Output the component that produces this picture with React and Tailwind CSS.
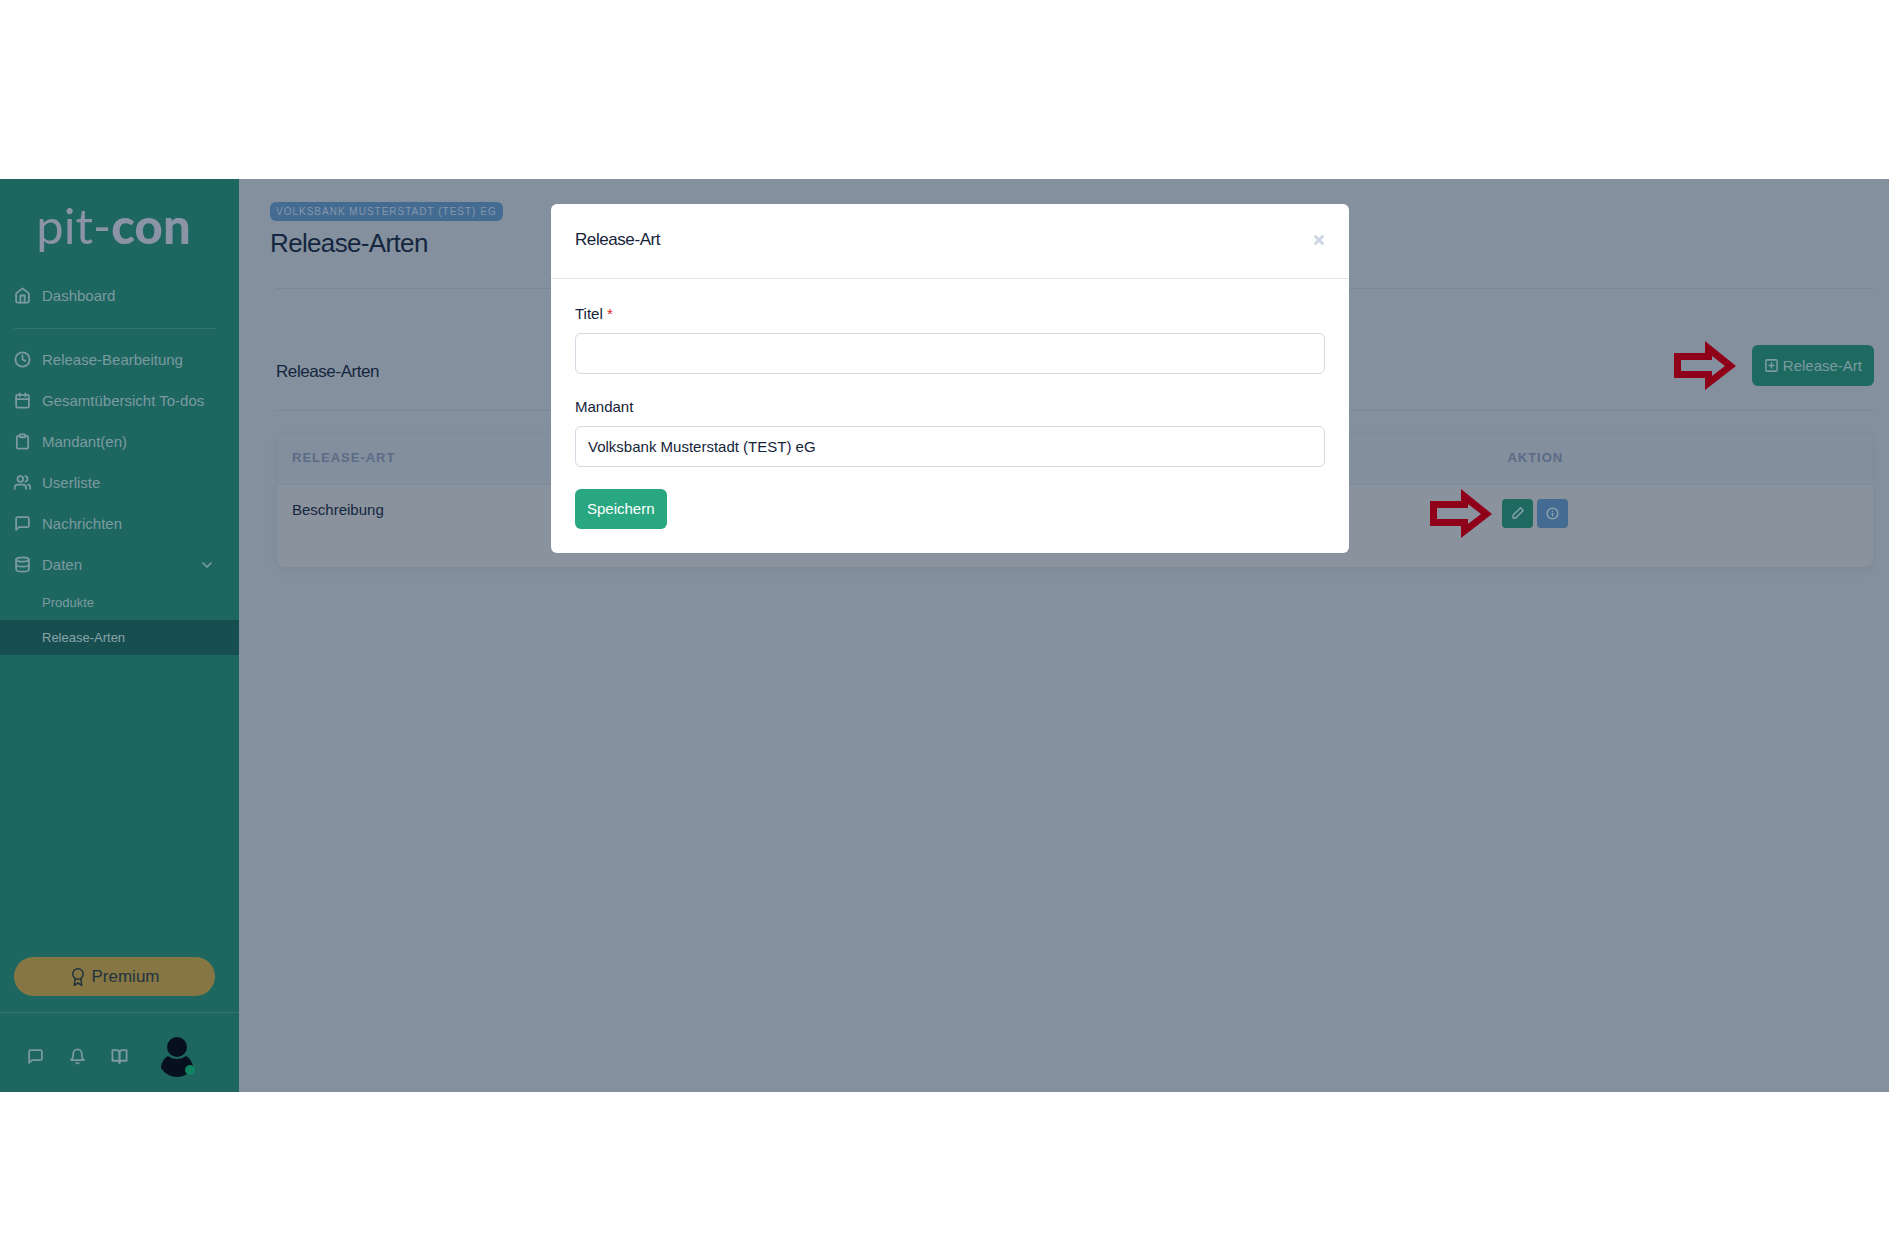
import {
  FiAward,
  FiBell,
  FiBookOpen,
  FiCalendar,
  FiChevronDown,
  FiClipboard,
  FiClock,
  FiDatabase,
  FiHome,
  FiInfo,
  FiMessageSquare,
  FiPlusSquare,
  FiUsers,
} from "react-icons/fi";

const navItems = [
  { label: "Release-Bearbeitung", icon: FiClock },
  { label: "Gesamtübersicht To-dos", icon: FiCalendar },
  { label: "Mandant(en)", icon: FiClipboard },
  { label: "Userliste", icon: FiUsers },
  { label: "Nachrichten", icon: FiMessageSquare },
  { label: "Daten", icon: FiDatabase, open: true },
];

const NavLink = ({ label, icon: Icon, open }) => (
  <a href="#" className="flex h-[41px] items-center pl-[14px] pr-6 text-[#7b9ba0]">
    <Icon className="mr-3 h-[17px] w-[17px] stroke-[2.5]" />
    <span className="-ml-px flex-1">{label}</span>
    {open && <FiChevronDown className="h-4 w-4 stroke-[2.5]" />}
  </a>
);

const Arrow = ({ className = "" }) => (
  <svg viewBox="0 0 62 49" className={`h-[49px] w-[62px] ${className}`}>
    <path
      fillRule="evenodd"
      fill="#8f0019"
      d="M0 12H31V0L62 25L31 49V37H0ZM7 19V30H38V35L51 25L38 15V19Z"
    />
  </svg>
);

const PencilIcon = () => (
  <svg viewBox="0 0 12 12" className="h-3 w-3" fill="none" stroke="currentColor" strokeWidth="1.3" strokeLinejoin="round">
    <path d="M8.5 .8L11.2 3.5L3.8 11H1V8.2Z" />
  </svg>
);

const Avatar = () => (
  <div className="relative ml-auto h-10 w-8">
    <svg viewBox="0 0 32 40" className="h-10 w-8" fill="#07101d">
      <circle cx="16" cy="10" r="10" />
      <path d="M7 19C2 22 0 27 0 31C4 37 10 40 16 40C22 40 28 37 32 31C32 27 30 22 25 19C20 23 12 23 7 19Z" />
    </svg>
    <span className="absolute -right-0.5 bottom-0.5 h-[10px] w-[10px] rounded-full bg-[#118361]" />
  </div>
);

const Sidebar = () => (
  <aside className="flex w-[239px] shrink-0 flex-col bg-[#1e6660]">
    <div className="mt-4 flex h-20 items-start justify-center pr-3 font-[Lato,sans-serif] text-[49px] leading-[60px] text-[#8a94a5]">
      <span>pit-</span>
      <span className="font-black">con</span>
    </div>
    <nav>
      <NavLink label="Dashboard" icon={FiHome} />
      <hr className="mb-[10px] ml-[14px] mr-6 mt-3 border-[#30756e]" />
      {navItems.map((item) => (
        <NavLink key={item.label} {...item} />
      ))}
      <a href="#" className="flex h-[35px] items-center pl-[42px] text-[13px] text-[#7b9ba0]">
        Produkte
      </a>
      <a href="#" className="flex h-[35px] items-center bg-[#174f50] pl-[42px] text-[13px] text-[#8aa3a8]">
        Release-Arten
      </a>
    </nav>
    <div className="mt-auto">
      <button className="mb-4 ml-[14px] flex h-[39px] w-[201px] items-center justify-center gap-1 rounded-full bg-[#857643] text-[17px] text-[#22333f]">
        <FiAward className="h-[18px] w-[18px]" />
        Premium
      </button>
      <div className="flex h-20 items-center border-t border-[#347771] pb-1 pl-[27px] pr-[46px] pt-3 text-[#7b9ba0]">
        <button aria-label="Nachrichten" className="mr-[25px]">
          <FiMessageSquare className="h-[17px] w-[17px] stroke-[2.5]" />
        </button>
        <button aria-label="Benachrichtigungen" className="mr-[25px]">
          <FiBell className="h-[17px] w-[17px] stroke-[2.5]" />
        </button>
        <button aria-label="Handbuch">
          <FiBookOpen className="h-[17px] w-[17px] stroke-[2.5]" />
        </button>
        <Avatar />
      </div>
    </div>
  </aside>
);

const ReleaseTable = () => (
  <div className="mt-[21px] overflow-hidden rounded-lg border border-[#808b9a] bg-[#8a929d] shadow-md shadow-[#7b8798]/30">
    <table className="w-full table-fixed">
      <thead className="bg-[#848f9d] text-[13px] tracking-[1px] text-[#5b6b86]">
        <tr className="h-[51px] border-b border-[#7f8a98]">
          <th className="w-[58%] pl-[15px] text-left font-bold">RELEASE-ART</th>
          <th className="pr-[5px] font-bold">AKTION</th>
        </tr>
      </thead>
      <tbody>
        <tr className="h-[83px] align-top">
          <td className="pl-[15px] pt-[14px]">Beschreibung</td>
          <td className="pr-[5px] pt-[14px]">
            <div className="relative mx-auto flex w-fit gap-1 text-[#8fa5ae]">
              <Arrow className="absolute -top-[10px] right-full mr-[10px]" />
              <button
                aria-label="Bearbeiten"
                className="flex h-[29px] w-[31px] items-center justify-center rounded bg-[#1e6a60]"
              >
                <PencilIcon />
              </button>
              <button
                aria-label="Info"
                className="flex h-[29px] w-[31px] items-center justify-center rounded bg-[#446b91]"
              >
                <FiInfo className="h-[13px] w-[13px] stroke-[2.5]" />
              </button>
            </div>
          </td>
        </tr>
      </tbody>
    </table>
  </div>
);

const MainContent = () => (
  <main className="flex-1 pl-[31px] pr-[15px] pt-[23px]">
    <span className="flex h-[19px] w-fit items-center rounded-md bg-[#446b91] px-[6px] pt-px text-[10px] tracking-[1px] text-[#8597ab]">
      VOLKSBANK MUSTERSTADT (TEST) EG
    </span>
    <h1 className="mt-[3px] text-[26px] leading-[38px] tracking-tight">Release-Arten</h1>
    <div className="ml-[6px]">
      <hr className="mt-[26px] border-[#7b8796]" />
      <div className="mt-[52px] flex items-center justify-between">
        <h2 className="pt-3 text-[17px] tracking-tight">Release-Arten</h2>
        <div className="flex items-center gap-4">
          <Arrow />
          <button className="flex h-[41px] items-center gap-1 rounded-md bg-[#1e6a60] px-3 text-[#7b9ba0]">
            <FiPlusSquare className="h-[15px] w-[15px] stroke-[2.5]" />
            Release-Art
          </button>
        </div>
      </div>
      <hr className="mt-5 border-[#7b8796]" />
      <ReleaseTable />
    </div>
  </main>
);

const fieldClass =
  "mt-2 block h-[41px] w-full appearance-none rounded-md border border-[#d3dae4] bg-white px-3 text-[#16243a]";

const ReleaseDialog = () => (
  <div className="absolute inset-x-0 top-[25px] flex justify-center pl-[11px]">
    <div
      role="dialog"
      aria-labelledby="dialog-title"
      className="w-full max-w-[798px] rounded-md bg-white text-[#16243a]"
    >
      <div className="flex h-[75px] items-center justify-between border-b border-[#e1e7ec] px-6 pb-[3px]">
        <h2 id="dialog-title" className="text-[17px] tracking-tight">
          Release-Art
        </h2>
        <button aria-label="Schließen" className="text-[#ccd6e4]">
          <svg viewBox="0 0 12 12" className="h-3 w-3" stroke="currentColor" strokeWidth="3" strokeLinecap="round">
            <path d="M2.5 2.5L9.5 9.5M9.5 2.5L2.5 9.5" />
          </svg>
        </button>
      </div>
      <form className="px-6 pb-6 pt-6">
        <label htmlFor="titel">
          Titel <span className="text-[#e51f2d]">*</span>
        </label>
        <input id="titel" type="text" className={fieldClass} />
        <label htmlFor="mandant" className="mt-[22px] block">
          Mandant
        </label>
        <select id="mandant" className={fieldClass}>
          <option>Volksbank Musterstadt (TEST) eG</option>
        </select>
        <button type="button" className="mt-[22px] h-10 rounded-md bg-[#29a780] px-3 text-white">
          Speichern
        </button>
      </form>
    </div>
  </div>
);

export default function App() {
  return (
    <div className="flex min-h-screen flex-col bg-white pb-[166px] pt-[179px] font-['Liberation_Sans',Arial,sans-serif] text-[15px] leading-[22px] text-[#14263f]">
      <div className="relative flex flex-1 bg-[#84909d]">
        <Sidebar />
        <MainContent />
        <ReleaseDialog />
      </div>
    </div>
  );
}
